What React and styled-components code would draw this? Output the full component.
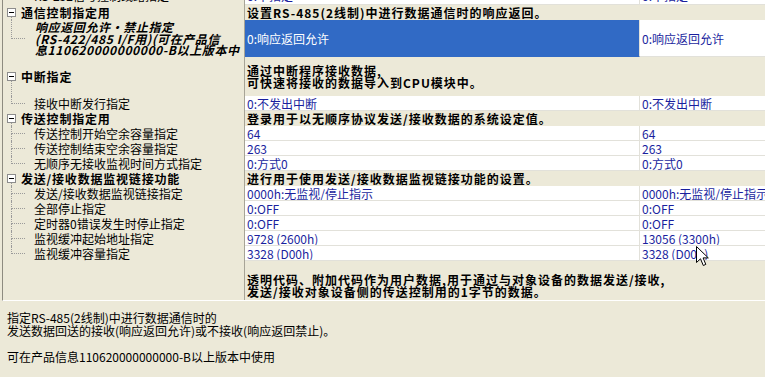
import React from 'react';
import styled, { createGlobalStyle, css } from 'styled-components';

const GlobalStyle = createGlobalStyle`
  html, body {
    margin: 0;
    padding: 0;
    background: #ece9d8;
    overflow: hidden;
  }
  body {
    font-family: "Noto Sans CJK SC", "Liberation Sans", sans-serif;
    font-size: 12px;
    color: #000;
  }
`;

const Page = styled.div`
  position: relative;
  width: 765px;
  height: 377px;
  display: flex;
  flex-direction: column;
  overflow: hidden;
`;

const TablePanel = styled.div`
  height: 300px;
  margin-left: 2px;
  border-left: 1px solid #8d8b80;
  border-bottom: 1px solid #ffffff;
  overflow: hidden;
`;

const TableBody = styled.div`
  margin-top: -14px;
`;

const Row = styled.div`
  display: grid;
  grid-template-columns: 242px 395px 1fr;
  height: ${p => p.$h}px;
`;

const TreeCell = styled.div`
  display: flex;
  align-items: stretch;
  border-right: 1px solid #a7a497;
  overflow: hidden;
`;

const ToggleCol = styled.div`
  display: flex;
  flex-direction: column;
  width: 9px;
  margin-left: 4px;
`;

const Spacer = styled.div`
  flex: 1;
`;

const Stem = styled.div`
  flex: 1;
  margin-left: 4px;
  ${p => p.$on && css`border-left: 1px dotted #9a9a9a;`}
`;

const ToggleBox = styled.div`
  box-sizing: border-box;
  width: 9px;
  height: 9px;
  border: 1px solid #8c8c8c;
  background: #fff;
  display: flex;
  align-items: center;
  justify-content: center;

  &::after {
    content: '';
    width: 5px;
    height: 1px;
    background: #000;
  }
`;

const CatLabel = styled.div`
  align-self: center;
  margin-left: 5px;
  font-weight: 700;
  font-size: 12px;
  letter-spacing: 0.8px;
  line-height: 13px;
  white-space: nowrap;
`;

const Connector = styled.div`
  display: flex;
  flex-direction: column;
  width: 14px;
  margin-left: 8px;
`;

const ConnUpper = styled.div`
  flex: 1;
  border-left: 1px dotted #9a9a9a;
  border-bottom: 1px dotted #9a9a9a;
`;

const ConnLower = styled.div`
  flex: 1;
  ${p => !p.$last && css`border-left: 1px dotted #9a9a9a;`}
`;

const ItemLabel = styled.div`
  align-self: center;
  margin-left: 9px;
  line-height: 13px;
  white-space: nowrap;

  ${p => p.$em && css`
    margin-left: 10px;
    font-weight: 700;
    font-style: italic;
    font-size: 12px;
    letter-spacing: 0.6px;
    line-height: 11.7px;
  `}
`;

const ValueCell = styled.div`
  display: flex;
  align-items: center;
  padding-left: 2px;
  background: #fff;
  color: #1a1f9e;
  border-bottom: 1px solid #e2e1da;
  white-space: nowrap;
  overflow: hidden;

  ${p => p.$mid && css`border-right: 1px solid #e2e1da;`}
  ${p => p.$selected && css`
    background: #316ac5;
    color: #fff;
    border-bottom-color: #316ac5;
  `}
`;

const DescCell = styled.div`
  grid-column: 2 / -1;
  display: flex;
  align-items: center;
  padding-left: 2px;
  font-weight: 700;
  font-size: 12px;
  letter-spacing: 1px;
  line-height: 11.7px;
  white-space: pre;
  overflow: hidden;
`;

const InfoPanel = styled.div`
  flex: 1;
  padding: 10px 0 0 7px;
  line-height: 13px;
  white-space: pre;
`;

const Cursor = styled.svg`
  position: absolute;
  left: 696px;
  top: 246px;
`;

const rows = [
  { type: 'item', h: 19, label: 'RS-232信号控制线路指定', v1: '0:不指定', v2: '0:不指定', last: true },
  { type: 'cat', label: '通信控制指定用', desc: '设置RS-485(2线制)中进行数据通信时的响应返回。', kids: true },
  {
    type: 'item', h: 37, em: true, selected: true, last: true,
    label: ['响应返回允许・禁止指定', '(RS-422/485 I/F用)(可在产品信', '息110620000000000-B以上版本中'],
    v1: '0:响应返回允许', v2: '0:响应返回允许',
  },
  { type: 'cat', h: 39, label: '中断指定', desc: '通过中断程序接收数据,\n可快速将接收的数据导入到CPU模块中。', kids: true },
  { type: 'item', label: '接收中断发行指定', v1: '0:不发出中断', v2: '0:不发出中断', last: true },
  { type: 'cat', label: '传送控制指定用', desc: '登录用于以无顺序协议发送/接收数据的系统设定值。', kids: true },
  { type: 'item', label: '传送控制开始空余容量指定', v1: '64', v2: '64' },
  { type: 'item', label: '传送控制结束空余容量指定', v1: '263', v2: '263' },
  { type: 'item', label: '无顺序无接收监视时间方式指定', v1: '0:方式0', v2: '0:方式0', last: true },
  { type: 'cat', label: '发送/接收数据监视链接功能', desc: '进行用于使用发送/接收数据监视链接功能的设置。', kids: true },
  { type: 'item', label: '发送/接收数据监视链接指定', v1: '0000h:无监视/停止指示', v2: '0000h:无监视/停止指示' },
  { type: 'item', label: '全部停止指定', v1: '0:OFF', v2: '0:OFF' },
  { type: 'item', label: '定时器0错误发生时停止指定', v1: '0:OFF', v2: '0:OFF' },
  { type: 'item', label: '监视缓冲起始地址指定', v1: '9728 (2600h)', v2: '13056 (3300h)' },
  { type: 'item', label: '监视缓冲容量指定', v1: '3328 (D00h)', v2: '3328 (D00h)', last: true },
  {
    type: 'cat', h: 50, label: '', kids: false,
    desc: '透明代码、附加代码作为用户数据,用于通过与对象设备的数据发送/接收,\n发送/接收对象设备侧的传送控制用的1字节的数据。',
  },
];

function CategoryRow({ row }) {
  return (
    <Row $h={row.h || 15}>
      <TreeCell>
        {row.label && (
          <>
            <ToggleCol>
              <Spacer />
              <ToggleBox />
              <Stem $on={row.kids} />
            </ToggleCol>
            <CatLabel>{row.label}</CatLabel>
          </>
        )}
      </TreeCell>
      <DescCell>{row.desc}</DescCell>
    </Row>
  );
}

function ItemRow({ row }) {
  const label = Array.isArray(row.label)
    ? row.label.map((l, i) => <div key={i}>{l}</div>)
    : row.label;
  return (
    <Row $h={row.h || 15}>
      <TreeCell>
        <Connector>
          <ConnUpper />
          <ConnLower $last={row.last} />
        </Connector>
        <ItemLabel $em={row.em}>{label}</ItemLabel>
      </TreeCell>
      <ValueCell $mid $selected={row.selected}>{row.v1}</ValueCell>
      <ValueCell>{row.v2}</ValueCell>
    </Row>
  );
}

export default function App() {
  return (
    <Page>
      <GlobalStyle />
      <TablePanel>
        <TableBody>
          {rows.map((row, i) =>
            row.type === 'cat'
              ? <CategoryRow key={i} row={row} />
              : <ItemRow key={i} row={row} />
          )}
        </TableBody>
      </TablePanel>
      <InfoPanel>
        {'指定RS-485(2线制)中进行数据通信时的\n发送数据回送的接收(响应返回允许)或不接收(响应返回禁止)。\n\n可在产品信息110620000000000-B以上版本中使用'}
      </InfoPanel>
      <Cursor width="14" height="22" viewBox="0 0 14 22">
        <path d="M0.5 0.5 L0.5 16.5 L4.5 12.8 L7.3 19.5 L9.8 18.4 L7.1 11.9 L12.3 11.9 Z"
          fill="#fff" stroke="#000" strokeWidth="1" strokeLinejoin="miter" />
      </Cursor>
    </Page>
  );
}
